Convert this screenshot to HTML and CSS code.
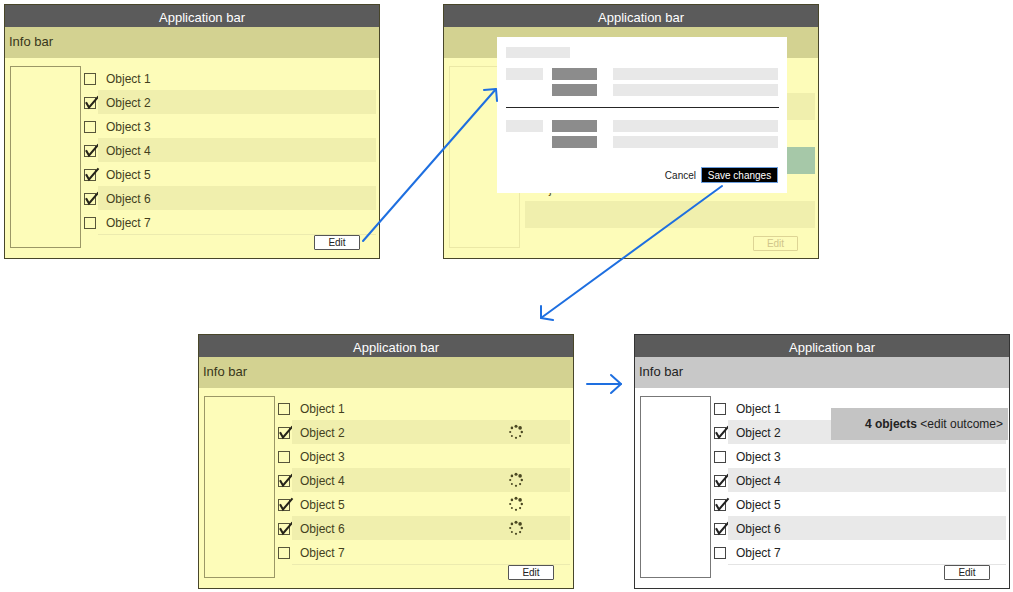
FILE: index.html
```html
<!DOCTYPE html>
<html>
<head>
<meta charset="utf-8">
<link rel="stylesheet" href="styles.css">
</head>
<body>
<div class="canvas">

  <!-- Panel 1 -->
  <div class="panel p1">
    <div class="appbar">Application bar</div>
    <div class="infobar">Info bar</div>
    <div class="body">
      <div class="sidebar"></div>
      <div class="list">
        <div class="row"><svg class="cb" viewBox="0 0 12 12"><rect x="0.5" y="0.5" width="11" height="11"/></svg><div class="label">Object 1</div></div>
        <div class="row alt"><svg class="cb" viewBox="0 0 12 12"><rect x="0.5" y="0.5" width="11" height="11"/><path class="tick" d="M2 5.2 L5 10.4 L14.5 -0.6"/></svg><div class="label">Object 2</div></div>
        <div class="row"><svg class="cb" viewBox="0 0 12 12"><rect x="0.5" y="0.5" width="11" height="11"/></svg><div class="label">Object 3</div></div>
        <div class="row alt"><svg class="cb" viewBox="0 0 12 12"><rect x="0.5" y="0.5" width="11" height="11"/><path class="tick" d="M2 5.2 L5 10.4 L14.5 -0.6"/></svg><div class="label">Object 4</div></div>
        <div class="row"><svg class="cb" viewBox="0 0 12 12"><rect x="0.5" y="0.5" width="11" height="11"/><path class="tick" d="M2 5.2 L5 10.4 L14.5 -0.6"/></svg><div class="label">Object 5</div></div>
        <div class="row alt"><svg class="cb" viewBox="0 0 12 12"><rect x="0.5" y="0.5" width="11" height="11"/><path class="tick" d="M2 5.2 L5 10.4 L14.5 -0.6"/></svg><div class="label">Object 6</div></div>
        <div class="row"><svg class="cb" viewBox="0 0 12 12"><rect x="0.5" y="0.5" width="11" height="11"/></svg><div class="label">Object 7</div></div>
        <div class="footer"><div class="edit">Edit</div></div>
      </div>
    </div>
  </div>

  <!-- Panel 2 -->
  <div class="panel p2">
    <div class="appbar">Application bar</div>
    <div class="infobar"></div>
    <div class="body">
      <div class="sidebar faded"></div>
      <div class="list list2">
        <div class="row2"></div>
        <div class="row2 alt"></div>
        <div class="row2"></div>
        <div class="row2 green"></div>
        <div class="row2"><span class="ghost">Object 5</span></div>
        <div class="row2 alt"></div>
        <div class="footer2"><div class="edit faded-edit">Edit</div></div>
      </div>
    </div>
    <div class="dialog">
      <div class="dlg-title"></div>
      <div class="dlg-group">
        <div class="lg"></div><div class="dk"></div><div class="lg"></div>
        <div></div><div class="dk"></div><div class="lg"></div>
      </div>
      <div class="dlg-line"></div>
      <div class="dlg-group second">
        <div class="lg"></div><div class="dk"></div><div class="lg"></div>
        <div></div><div class="dk"></div><div class="lg"></div>
      </div>
      <div class="dlg-buttons">
        <span class="cancel">Cancel</span>
        <span class="save">Save changes</span>
      </div>
    </div>
  </div>

  <!-- Panel 3 -->
  <div class="panel p3">
    <div class="appbar">Application bar</div>
    <div class="infobar">Info bar</div>
    <div class="body">
      <div class="sidebar"></div>
      <div class="list">
        <div class="row"><svg class="cb" viewBox="0 0 12 12"><rect x="0.5" y="0.5" width="11" height="11"/></svg><div class="label">Object 1</div></div>
        <div class="row alt"><svg class="cb" viewBox="0 0 12 12"><rect x="0.5" y="0.5" width="11" height="11"/><path class="tick" d="M2 5.2 L5 10.4 L14.5 -0.6"/></svg><div class="label">Object 2<svg class="spin" viewBox="0 0 16 16"><circle cx="8" cy="2.2" r="1.5"/><circle cx="12.1" cy="3.9" r="1.8"/><circle cx="13.8" cy="8" r="1.2"/><circle cx="12.1" cy="12.1" r="1.1"/><circle cx="8" cy="13.8" r="1.1"/><circle cx="3.9" cy="12.1" r="1"/><circle cx="2.2" cy="8" r="1.1"/><circle cx="3.9" cy="3.9" r="1.3"/></svg></div></div>
        <div class="row"><svg class="cb" viewBox="0 0 12 12"><rect x="0.5" y="0.5" width="11" height="11"/></svg><div class="label">Object 3</div></div>
        <div class="row alt"><svg class="cb" viewBox="0 0 12 12"><rect x="0.5" y="0.5" width="11" height="11"/><path class="tick" d="M2 5.2 L5 10.4 L14.5 -0.6"/></svg><div class="label">Object 4<svg class="spin" viewBox="0 0 16 16"><circle cx="8" cy="2.2" r="1.5"/><circle cx="12.1" cy="3.9" r="1.8"/><circle cx="13.8" cy="8" r="1.2"/><circle cx="12.1" cy="12.1" r="1.1"/><circle cx="8" cy="13.8" r="1.1"/><circle cx="3.9" cy="12.1" r="1"/><circle cx="2.2" cy="8" r="1.1"/><circle cx="3.9" cy="3.9" r="1.3"/></svg></div></div>
        <div class="row"><svg class="cb" viewBox="0 0 12 12"><rect x="0.5" y="0.5" width="11" height="11"/><path class="tick" d="M2 5.2 L5 10.4 L14.5 -0.6"/></svg><div class="label">Object 5<svg class="spin" viewBox="0 0 16 16"><circle cx="8" cy="2.2" r="1.5"/><circle cx="12.1" cy="3.9" r="1.8"/><circle cx="13.8" cy="8" r="1.2"/><circle cx="12.1" cy="12.1" r="1.1"/><circle cx="8" cy="13.8" r="1.1"/><circle cx="3.9" cy="12.1" r="1"/><circle cx="2.2" cy="8" r="1.1"/><circle cx="3.9" cy="3.9" r="1.3"/></svg></div></div>
        <div class="row alt"><svg class="cb" viewBox="0 0 12 12"><rect x="0.5" y="0.5" width="11" height="11"/><path class="tick" d="M2 5.2 L5 10.4 L14.5 -0.6"/></svg><div class="label">Object 6<svg class="spin" viewBox="0 0 16 16"><circle cx="8" cy="2.2" r="1.5"/><circle cx="12.1" cy="3.9" r="1.8"/><circle cx="13.8" cy="8" r="1.2"/><circle cx="12.1" cy="12.1" r="1.1"/><circle cx="8" cy="13.8" r="1.1"/><circle cx="3.9" cy="12.1" r="1"/><circle cx="2.2" cy="8" r="1.1"/><circle cx="3.9" cy="3.9" r="1.3"/></svg></div></div>
        <div class="row"><svg class="cb" viewBox="0 0 12 12"><rect x="0.5" y="0.5" width="11" height="11"/></svg><div class="label">Object 7</div></div>
        <div class="footer"><div class="edit">Edit</div></div>
      </div>
    </div>
  </div>

  <!-- Panel 4 -->
  <div class="panel p4 gray">
    <div class="appbar">Application bar</div>
    <div class="infobar">Info bar</div>
    <div class="body">
      <div class="sidebar"></div>
      <div class="list">
        <div class="row"><svg class="cb" viewBox="0 0 12 12"><rect x="0.5" y="0.5" width="11" height="11"/></svg><div class="label">Object 1</div></div>
        <div class="row alt"><svg class="cb" viewBox="0 0 12 12"><rect x="0.5" y="0.5" width="11" height="11"/><path class="tick" d="M2 5.2 L5 10.4 L14.5 -0.6"/></svg><div class="label">Object 2</div></div>
        <div class="row"><svg class="cb" viewBox="0 0 12 12"><rect x="0.5" y="0.5" width="11" height="11"/></svg><div class="label">Object 3</div></div>
        <div class="row alt"><svg class="cb" viewBox="0 0 12 12"><rect x="0.5" y="0.5" width="11" height="11"/><path class="tick" d="M2 5.2 L5 10.4 L14.5 -0.6"/></svg><div class="label">Object 4</div></div>
        <div class="row"><svg class="cb" viewBox="0 0 12 12"><rect x="0.5" y="0.5" width="11" height="11"/><path class="tick" d="M2 5.2 L5 10.4 L14.5 -0.6"/></svg><div class="label">Object 5</div></div>
        <div class="row alt"><svg class="cb" viewBox="0 0 12 12"><rect x="0.5" y="0.5" width="11" height="11"/><path class="tick" d="M2 5.2 L5 10.4 L14.5 -0.6"/></svg><div class="label">Object 6</div></div>
        <div class="row"><svg class="cb" viewBox="0 0 12 12"><rect x="0.5" y="0.5" width="11" height="11"/></svg><div class="label">Object 7</div></div>
        <div class="footer"><div class="edit">Edit</div></div>
      </div>
    </div>
    <div class="toast"><b>4 objects</b>&nbsp;&lt;edit outcome&gt;</div>
  </div>

  <svg class="arrows" viewBox="0 0 1013 592">
    <g>
      <path d="M363 241 L496 89"/>
      <path d="M484 90 L496 89 L497 101"/>
      <path d="M722 186 L541 318"/>
      <path d="M541 306 L541 318 L553 320"/>
      <path d="M587 384 L621 384"/>
      <path d="M611 375 L621 384 L611 393"/>
    </g>
  </svg>
</div>
</body>
</html>
```

FILE: styles.css
```css
* { box-sizing: border-box; }

body {
  margin: 0;
  background: #fff;
  font-family: "Liberation Sans", Arial, sans-serif;
}

.canvas {
  position: relative;
  width: 1013px;
  height: 592px;
  overflow: hidden;
}

.panel {
  position: absolute;
  width: 376px;
  height: 255px;
  border: 1px solid #48462a;
  background: #fdfcb9;
  display: flex;
  flex-direction: column;
}

.p1 { left: 4px; top: 4px; }
.p2 { left: 443px; top: 4px; }
.p3 { left: 198px; top: 334px; }
.p4 { left: 634px; top: 334px; }

.appbar {
  height: 22px;
  flex: none;
  background: #5b5b5b;
  color: #fff;
  font-size: 13px;
  display: flex;
  align-items: center;
  justify-content: center;
  padding-left: 20px;
  padding-top: 2px;
}

.infobar {
  height: 31px;
  flex: none;
  background: #d3d291;
  color: #38361a;
  font-size: 13px;
  display: flex;
  align-items: center;
  padding-left: 4px;
  padding-bottom: 3px;
}

.body {
  flex: 1;
  display: flex;
  padding: 8px 3px 0 5px;
}

.sidebar {
  width: 71px;
  height: 182px;
  flex: none;
  border: 1px solid #9b9766;
}

.list {
  flex: 1;
  margin-left: 3px;
  display: flex;
  flex-direction: column;
}

.row {
  height: 24px;
  display: flex;
  align-items: center;
}

.cb {
  width: 12px;
  height: 12px;
  flex: none;
  overflow: visible;
  margin-top: 1px;
}

.cb rect {
  fill: none;
  stroke: #57553a;
  stroke-width: 1;
}

.cb .tick {
  fill: none;
  stroke: #26241a;
  stroke-width: 2.1;
  stroke-linejoin: miter;
}

.label {
  flex: 1;
  margin-left: 2px;
  height: 24px;
  display: flex;
  align-items: center;
  padding-left: 8px;
  padding-top: 2px;
  font-size: 12px;
  color: #433f1e;
}

.row.alt .label { background: #f0efad; }

.spin {
  width: 16px;
  height: 16px;
  margin-left: auto;
  margin-right: 46px;
  margin-top: -2px;
}

.spin circle { fill: #4a4722; }

.footer {
  margin-left: 14px;
  border-top: 1px solid #ecebaf;
  display: flex;
  justify-content: flex-end;
  padding-right: 16px;
}

.edit {
  width: 46px;
  height: 15px;
  border: 1px solid #555;
  border-radius: 1px;
  background: #fff;
  color: #222;
  font-size: 10px;
  display: flex;
  align-items: center;
  justify-content: center;
}

/* panel 2 (behind dialog) */
.sidebar.faded { border-color: #ebe8a6; }

.list2 { margin-left: 5px; }

.row2 {
  height: 27px;
  display: flex;
  align-items: center;
  padding-left: 8px;
}

.row2.alt { background: #f0efad; }
.row2.green { background: #a6c8a8; }

.ghost {
  font-size: 12px;
  color: #5c5626;
  margin-top: 2px;
}

.footer2 {
  margin-top: 8px;
  display: flex;
  justify-content: flex-end;
  padding-right: 17px;
}

.edit.faded-edit {
  background: transparent;
  border-color: #ddd495;
  color: #d0c58a;
  width: 45px;
}

.dialog {
  position: absolute;
  left: 53px;
  top: 32px;
  width: 290px;
  height: 156px;
  background: #fff;
  padding: 10px 9px 0 9px;
  display: flex;
  flex-direction: column;
}

.dlg-title {
  width: 64px;
  height: 11px;
  background: #e8e8e8;
}

.dlg-group {
  margin-top: 10px;
  display: grid;
  grid-template-columns: 37px 45px 172px;
  column-gap: 9px;
  row-gap: 4px;
  grid-auto-rows: 12px;
}

.dlg-group > div:nth-child(3n) { margin-left: 7px; }

.dlg-group.second { margin-top: 12px; }

.lg { background: #e8e8e8; }
.dk { background: #8c8c8c; }

.dlg-line {
  margin-top: 11px;
  height: 1px;
  width: 273px;
  background: #262626;
}

.dlg-buttons {
  margin-top: 19px;
  display: flex;
  justify-content: flex-end;
  align-items: center;
  gap: 5px;
}

.cancel {
  font-size: 10px;
  color: #222;
}

.save {
  width: 77px;
  height: 16px;
  background: #000;
  color: #fff;
  font-size: 10px;
  border: 1px solid #6c9fe0;
  display: flex;
  align-items: center;
  justify-content: center;
}

/* panel 4 (gray) */
.panel.gray {
  background: #fff;
  border-color: #333;
}

.gray .infobar { background: #c8c8c8; color: #222; }
.gray .sidebar { border-color: #777; }
.gray .cb rect { stroke: #444; }
.gray .cb .tick { stroke: #222; }
.gray .label { color: #222; }
.gray .row.alt .label { background: #e9e9e9; }
.gray .footer { border-top-color: #e4e4e4; }

.toast {
  position: absolute;
  left: 196px;
  top: 73px;
  width: 177px;
  height: 32px;
  background: #c4c4c4;
  color: #222;
  font-size: 12px;
  display: flex;
  align-items: center;
  justify-content: flex-end;
  padding-right: 5px;
}

.arrows {
  position: absolute;
  left: 0;
  top: 0;
  width: 1013px;
  height: 592px;
  pointer-events: none;
}

.arrows g {
  fill: none;
  stroke: #1e6fe0;
  stroke-width: 2;
  stroke-linecap: round;
  stroke-linejoin: round;
}
```
